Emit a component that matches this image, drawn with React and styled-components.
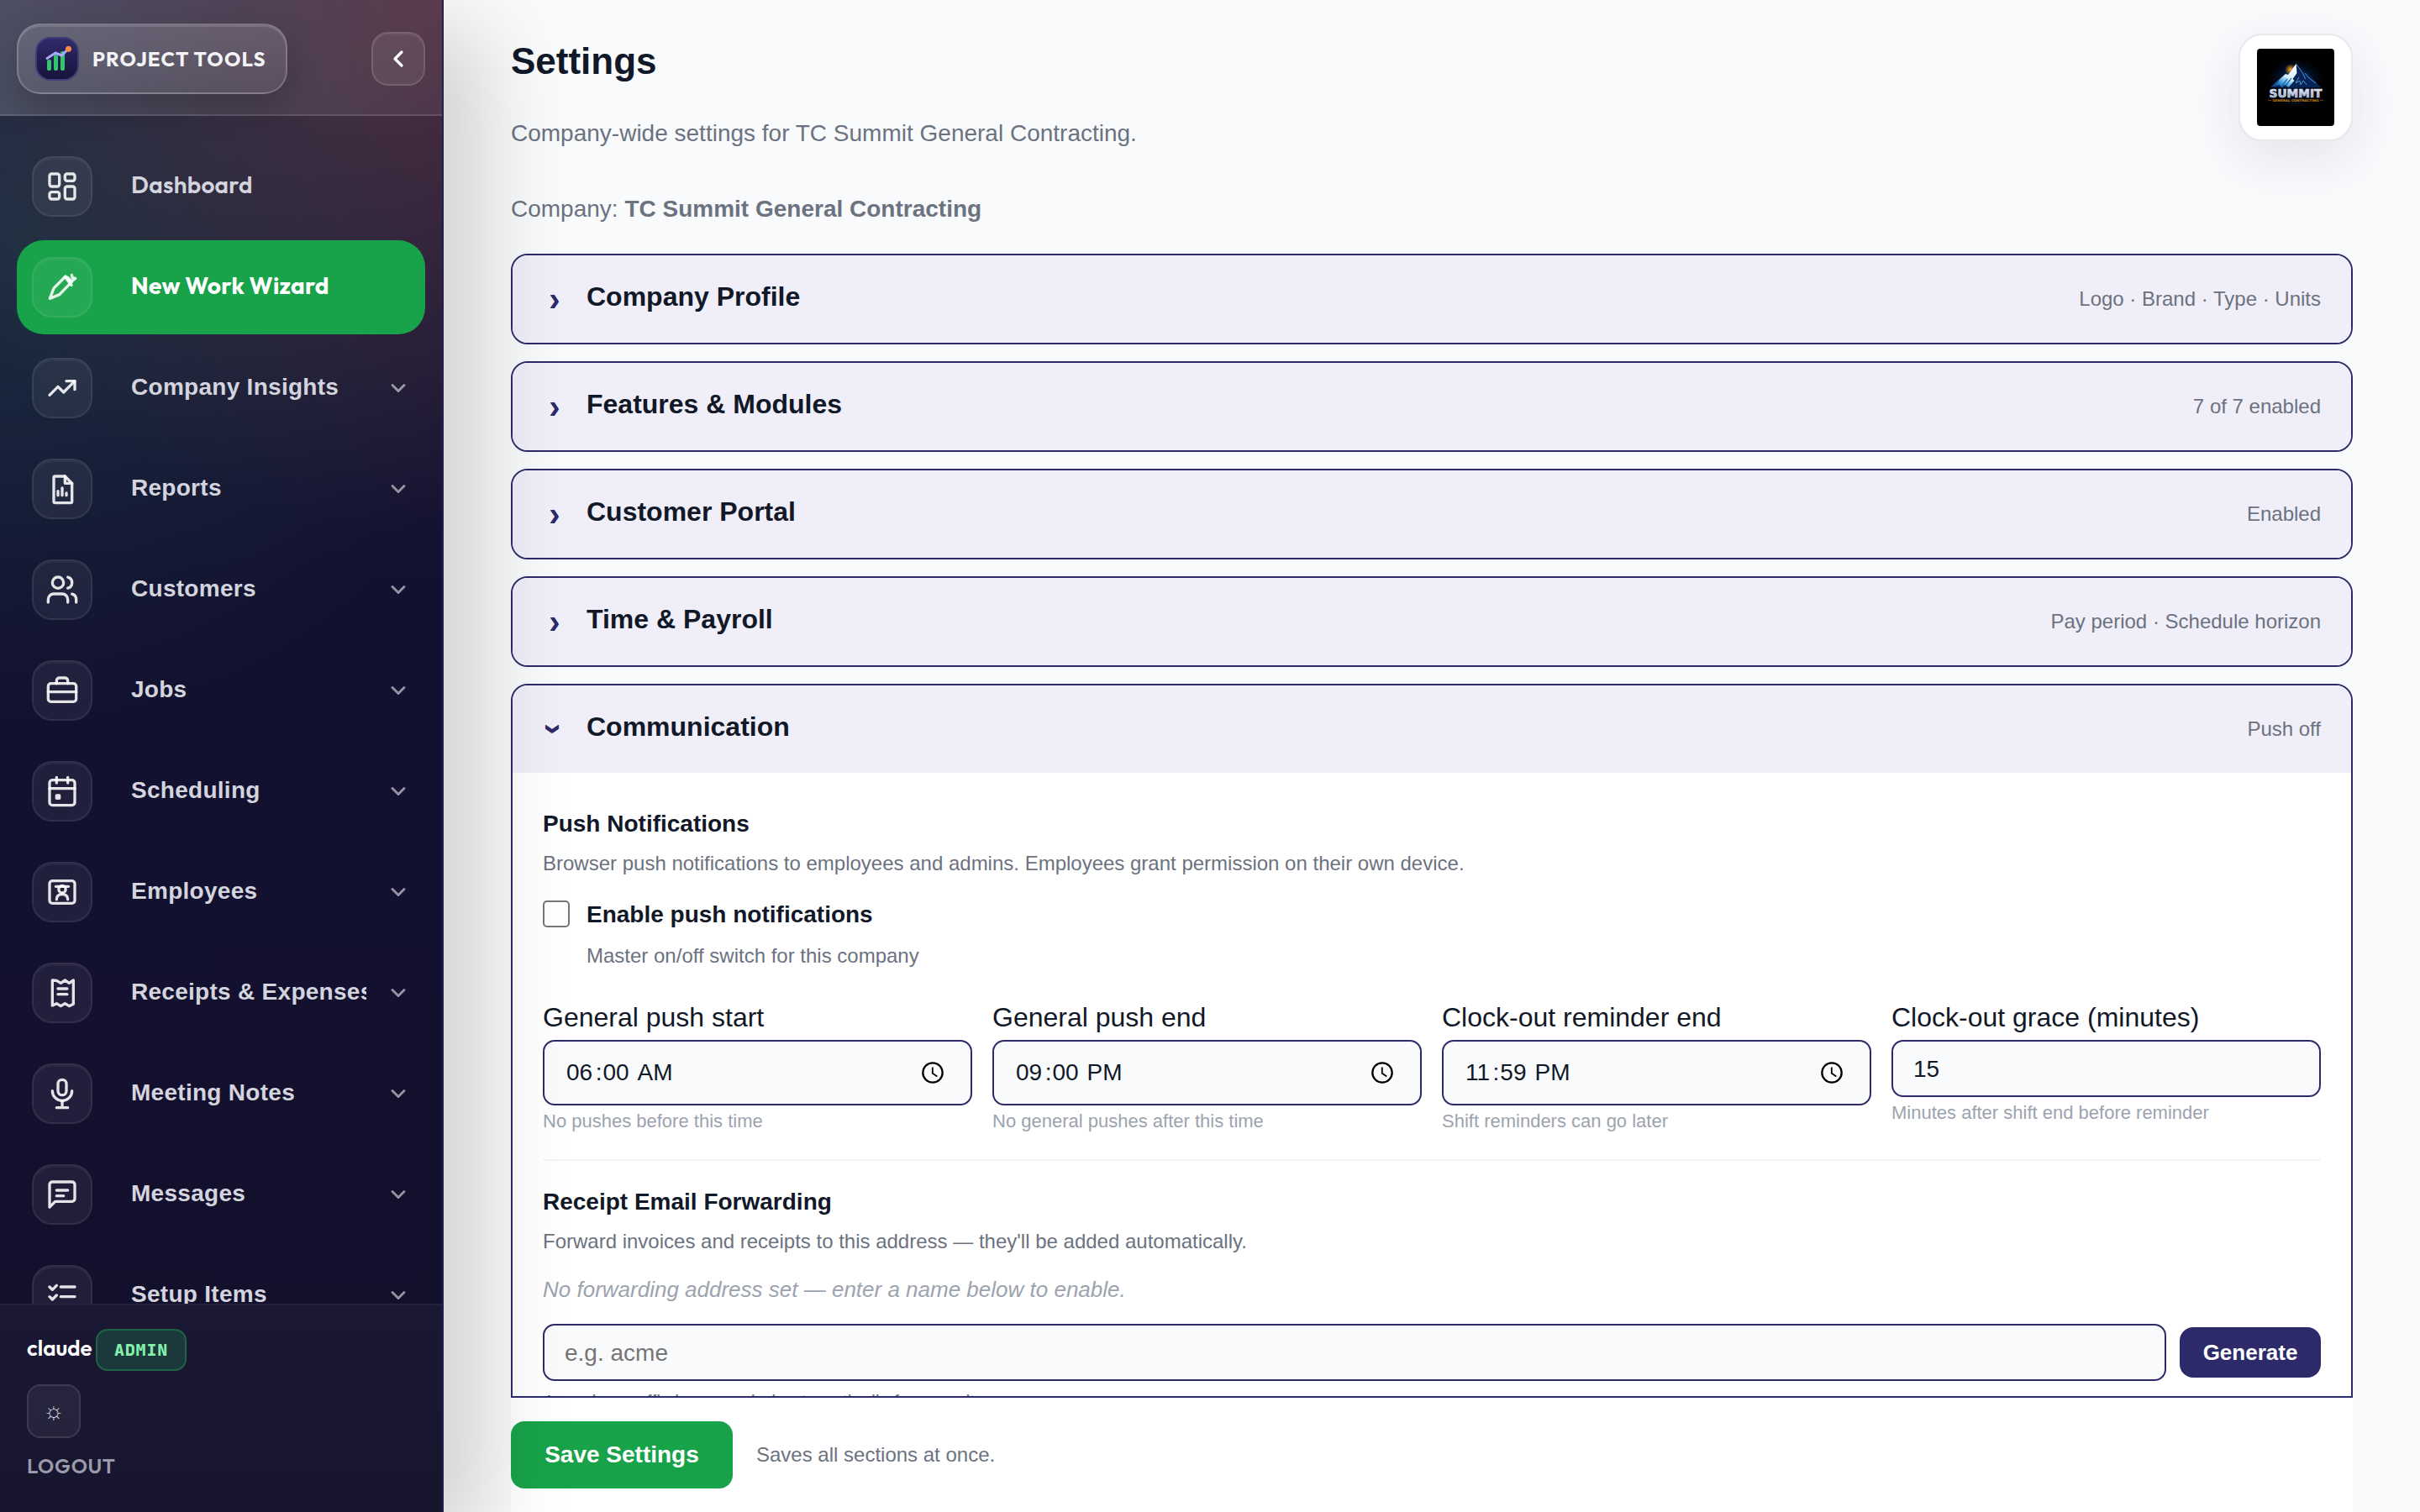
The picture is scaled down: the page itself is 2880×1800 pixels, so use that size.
import React from "react";
import styled, { createGlobalStyle } from "styled-components";

const GlobalStyle = createGlobalStyle`
  * {
    box-sizing: border-box;
  }
  body {
    margin: 0;
    background: #f9fafc;
    color: #111827;
    font-family: "Liberation Sans", Arial, sans-serif;
  }
  button {
    font-family: inherit;
    border: 0;
  }
  h1, h2, h3, p {
    margin: 0;
  }
`;

const Shell = styled.div`
  display: flex;
  width: 2880px;
  height: 1800px;
  overflow: hidden;
`;

/* ---------- sidebar ---------- */

const Sidebar = styled.aside`
  position: relative;
  z-index: 2;
  display: flex;
  flex-direction: column;
  flex: none;
  width: 528px;
  height: 1800px;
  border-right: 2px solid #221f4e;
  color: #fff;
  background:
    radial-gradient(620px 560px at 0% 300px, rgba(34, 120, 90, 0.24), rgba(34, 120, 90, 0) 100%),
    radial-gradient(700px 640px at 100% 0%, rgba(255, 112, 60, 0.22), rgba(255, 112, 60, 0) 100%),
    linear-gradient(180deg, #1e1b42 0%, #131130 38%, #141130 65%, #120f2a 100%);
  box-shadow: 44px 36px 100px rgba(0, 0, 0, 0.17);
`;

const SidebarHeader = styled.div`
  display: flex;
  align-items: center;
  justify-content: space-between;
  flex: none;
  height: 138px;
  padding: 0 20px;
  border-bottom: 2px solid rgba(255, 255, 255, 0.12);
  background: linear-gradient(
    100deg,
    rgba(255, 255, 255, 0.17),
    rgba(255, 255, 255, 0.1) 50%,
    rgba(255, 255, 255, 0.06)
  );
`;

const Brand = styled.div`
  display: flex;
  align-items: center;
  gap: 16px;
  width: 322px;
  height: 84px;
  padding: 0 20px;
  margin-top: 4px;
  border: 2px solid rgba(255, 255, 255, 0.2);
  border-radius: 28px;
  background: linear-gradient(180deg, rgba(255, 255, 255, 0.14), rgba(255, 255, 255, 0.08));
  box-shadow: 0 16px 40px rgba(0, 0, 0, 0.2), inset 0 2px 0 rgba(255, 255, 255, 0.12);
`;

const BrandName = styled.span`
  font-family: Outfit, Lato, sans-serif;
  font-size: 24px;
  font-weight: 700;
  letter-spacing: 1.2px;
  white-space: nowrap;
  color: #f4f4f7;
`;

const CollapseButton = styled.button`
  display: flex;
  align-items: center;
  justify-content: center;
  width: 64px;
  height: 64px;
  margin-top: 4px;
  padding: 0;
  border: 2px solid rgba(255, 255, 255, 0.13);
  border-radius: 20px;
  background: rgba(255, 255, 255, 0.08);
  box-shadow: inset 0 2px 0 rgba(255, 255, 255, 0.05);
  color: #fff;
`;

const Nav = styled.nav`
  display: flex;
  flex-direction: column;
  gap: 8px;
  flex: 1;
  min-height: 0;
  padding: 28px 20px 0;
  overflow: hidden;
`;

const NavItem = styled.a`
  display: flex;
  align-items: center;
  flex: none;
  height: 112px;
  padding: 0 18px;
  border-radius: 32px;
  background: ${(props) => (props.$active ? "#18a34a" : "transparent")};
  color: ${(props) => (props.$active ? "#fff" : "#d3d4de")};
`;

const NavIcon = styled.span`
  display: flex;
  align-items: center;
  justify-content: center;
  flex: none;
  width: 72px;
  height: 72px;
  margin-right: 46px;
  border: 2px solid rgba(255, 255, 255, 0.08);
  border-radius: 24px;
  background: rgba(255, 255, 255, 0.06);
  box-shadow: inset 0 2px 0 rgba(255, 255, 255, 0.04);
  color: rgba(255, 255, 255, 0.88);
`;

const NavLabel = styled.span`
  flex: 1;
  min-width: 0;
  overflow: hidden;
  padding-bottom: ${(props) => (props.$brand ? 5 : 3)}px;
  font-family: ${(props) =>
    props.$brand ? "Outfit, Lato, sans-serif" : '"Liberation Sans", Arial, sans-serif'};
  font-size: 28px;
  font-weight: ${(props) => (props.$active ? 700 : 600)};
  line-height: 36px;
  letter-spacing: 0.28px;
  white-space: nowrap;
`;

const NavCaret = styled.span`
  display: flex;
  flex: none;
  margin-left: 24px;
  color: rgba(255, 255, 255, 0.55);
`;

const SidebarFooter = styled.div`
  display: flex;
  flex-direction: column;
  align-items: flex-start;
  flex: none;
  height: 248px;
  padding: 28px 32px 0;
  border-top: 2px solid rgba(255, 255, 255, 0.06);
  background: linear-gradient(180deg, rgba(255, 255, 255, 0.035), rgba(255, 255, 255, 0.02));
  font-family: Outfit, Lato, sans-serif;
`;

const UserRow = styled.div`
  display: flex;
  align-items: center;
  gap: 5px;
  height: 50px;
`;

const UserName = styled.span`
  width: 77px;
  font-size: 26px;
  font-weight: 600;
  line-height: 46px;
  padding-bottom: 4px;
  white-space: nowrap;
`;

const RoleBadge = styled.span`
  display: flex;
  align-items: center;
  justify-content: center;
  width: 108px;
  height: 50px;
  border: 2px solid rgba(34, 197, 94, 0.32);
  border-radius: 14px;
  background: rgba(34, 197, 94, 0.2);
  color: #86efac;
  font-family: "JetBrains Mono", "DejaVu Sans Mono", monospace;
  font-size: 20px;
  font-weight: 800;
  letter-spacing: 0.8px;
`;

const ThemeButton = styled.button`
  display: flex;
  align-items: center;
  justify-content: center;
  width: 64px;
  height: 64px;
  margin-top: 16px;
  padding: 0;
  border: 2px solid rgba(255, 255, 255, 0.1);
  border-radius: 16px;
  background: rgba(255, 255, 255, 0.06);
  color: #d3d4de;
  font-family: "Liberation Sans", sans-serif;
  font-size: 28px;
`;

const Logout = styled.a`
  margin-top: 17px;
  color: #9b9cab;
  font-size: 24px;
  font-weight: 600;
  line-height: 32px;
  letter-spacing: 0.72px;
`;

/* ---------- page ---------- */

const Main = styled.main`
  display: flex;
  flex-direction: column;
  flex: 1;
  min-width: 0;
  height: 1800px;
`;

const Scroll = styled.div`
  flex: 1;
  min-height: 0;
  padding: 40px 80px 0;
  overflow: hidden;
`;

const PageHeader = styled.header`
  display: flex;
  align-items: flex-start;
  justify-content: space-between;
  height: 140px;
`;

const PageTitle = styled.h1`
  margin-top: 8px;
  font-size: 44px;
  line-height: 50px;
`;

const Lead = styled.p`
  margin-top: ${(props) => props.$gap}px;
  color: #6b7280;
  font-size: 28px;
  line-height: 44px;
`;

const LogoCard = styled.div`
  width: 136px;
  height: 128px;
  padding: 16px 20px;
  border: 2px solid #e8e7ee;
  border-radius: 28px;
  background: #fff;
  box-shadow: 0 20px 60px rgba(45, 42, 106, 0.1);
  svg {
    display: block;
    border-radius: 4px;
  }
`;

const Sections = styled.div`
  display: flex;
  flex-direction: column;
  gap: 20px;
  margin-top: 31px;
`;

const SectionCard = styled.section`
  flex: none;
  border: 2px solid #2d2a6a;
  border-radius: 20px;
  background: #fff;
  overflow: hidden;
`;

const SectionHead = styled.div`
  display: flex;
  align-items: center;
  height: 104px;
  padding: 0 36px;
  background: #f0eef8;
`;

const SectionArrow = styled.span`
  flex: none;
  width: 28px;
  margin-right: 24px;
  color: #2d2a6a;
  font-size: 40px;
  font-weight: 700;
  line-height: 28px;
  text-align: center;
  transform: ${(props) => (props.$open ? "rotate(90deg)" : "none")};
`;

const SectionTitle = styled.h2`
  flex: 1;
  padding-bottom: 6px;
  font-size: 32px;
  line-height: 40px;
`;

const SectionNote = styled.span`
  color: #6b7280;
  font-size: 24px;
`;

const SectionBody = styled.div`
  padding: 37px 36px 80px;
`;

const GroupTitle = styled.h3`
  font-size: 28px;
  line-height: 48px;
`;

const GroupText = styled.p`
  margin-top: 5px;
  color: #6b7280;
  font-size: 24px;
  line-height: 36px;
`;

const CheckRow = styled.label`
  display: flex;
  align-items: flex-start;
  gap: 20px;
  margin-top: 26px;
  font-size: 28px;
  font-weight: 700;
  line-height: 34px;
`;

const CheckBox = styled.input`
  appearance: none;
  width: 32px;
  height: 32px;
  margin: 0;
  border: 2px solid #767676;
  border-radius: 5px;
  background: #fff;
`;

const CheckHint = styled.p`
  margin: 14px 0 0 52px;
  color: #6b7280;
  font-size: 24px;
  line-height: 36px;
`;

const FieldGrid = styled.div`
  display: grid;
  grid-template-columns: repeat(4, 1fr);
  gap: 24px;
  align-items: start;
  margin-top: 35px;
`;

const FieldLabel = styled.div`
  font-size: 32px;
  line-height: 40px;
`;

const FieldBox = styled.div`
  display: flex;
  align-items: center;
  height: ${(props) => (props.$time ? 78 : 68)}px;
  margin-top: 7px;
  padding: ${(props) => (props.$time ? "0 32px 0 26px" : "2px 24px 0")};
  border: 2px solid #2d2a6a;
  border-radius: 14px;
  background: #f9fafc;
  font-size: 28px;
  line-height: 32px;
  svg {
    margin-left: auto;
  }
`;

const TimePart = styled.span`
  margin-right: ${(props) => props.$after}px;
`;

const FieldHint = styled.p`
  margin-top: 4px;
  color: #9ca3af;
  font-size: 22px;
  line-height: 30px;
`;

const Divider = styled.hr`
  height: 2px;
  margin: 30px 0 25px;
  border: 0;
  background: #f3f4f6;
`;

const EmptyNote = styled.p`
  margin-top: 19px;
  color: #9ca3af;
  font-size: 26px;
  font-style: italic;
  line-height: 40px;
`;

const ForwardRow = styled.div`
  display: flex;
  align-items: center;
  gap: 16px;
  margin-top: 21px;
`;

const TextInput = styled.input`
  flex: 1;
  min-width: 0;
  height: 68px;
  padding: 2px 24px 0;
  border: 2px solid #2d2a6a;
  border-radius: 14px;
  background: #f9fafc;
  font-family: inherit;
  font-size: 28px;
  &::placeholder {
    color: #757575;
  }
`;

const GenerateButton = styled.button`
  width: 168px;
  height: 60px;
  padding: 0;
  border-radius: 16px;
  background: #2d2a6a;
  color: #fff;
  font-size: 26px;
  font-weight: 700;
`;

const SuffixHint = styled.p`
  margin-top: 10px;
  color: #6b7280;
  font-size: 22px;
  line-height: 30px;
`;

const SaveBar = styled.div`
  display: flex;
  align-items: center;
  gap: 28px;
  flex: none;
  height: 138px;
  margin: 0 80px;
  border-top: 2px solid #2d2a6a;
  background: #fff;
  color: #6b7280;
  font-size: 24px;
`;

const SaveButton = styled.button`
  width: 264px;
  height: 80px;
  padding: 0;
  border-radius: 16px;
  background: #18a34a;
  color: #fff;
  font-size: 28px;
  font-weight: 700;
`;

const Icon = ({ size = 40, stroke = 2, children }) => (
  <svg
    width={size}
    height={size}
    viewBox="0 0 24 24"
    fill="none"
    stroke="currentColor"
    strokeWidth={stroke}
    strokeLinecap="round"
    strokeLinejoin="round"
  >
    {children}
  </svg>
);

const icons = {
  dashboard: (
    <>
      <rect x="3" y="3" width="7" height="9" rx="1.5" />
      <rect x="14" y="3" width="7" height="5" rx="1.5" />
      <rect x="14" y="12" width="7" height="9" rx="1.5" />
      <rect x="3" y="16" width="7" height="5" rx="1.5" />
    </>
  ),
  wizard: (
    <>
      <path d="M3.2 20 6 12.7 14.4 4.2l3.8 4.6-8.1 8.4z" />
      <path d="m14 4.5 4.6 6" />
      <path d="m16 5 3 3" />
      <path d="m18.8 3.2.6 2.2 2 .2-1.6 1.3" />
    </>
  ),
  insights: (
    <>
      <path d="m3 17 6-6 4 4 8-8" />
      <path d="M15 7h6v6" />
    </>
  ),
  reports: (
    <>
      <path d="M14 3H7a1 1 0 0 0-1 1v17a1 1 0 0 0 1 1h11a1 1 0 0 0 1-1V8z" />
      <path d="M14 3v5h5" />
      <path d="M9 13.600v3M12 11.300v5.300M15 15v1.600" />
    </>
  ),
  customers: (
    <>
      <path d="M16 21v-2a4 4 0 0 0-4-4H6a4 4 0 0 0-4 4v2" />
      <circle cx="9" cy="7" r="4" />
      <path d="M22 21v-2a4 4 0 0 0-3-3.87" />
      <path d="M16 3.13a4 4 0 0 1 0 7.75" />
    </>
  ),
  jobs: (
    <>
      <rect x="2" y="7" width="20" height="13" rx="2" />
      <path d="M8 7V5a2 2 0 0 1 2-2h4a2 2 0 0 1 2 2v2" />
      <path d="M2 13h20" />
    </>
  ),
  scheduling: (
    <>
      <rect x="3" y="4" width="18" height="18" rx="2" />
      <path d="M8 2v4M16 2v4M3 10h18" />
      <rect x="8" y="15" width="2" height="2" />
    </>
  ),
  employees: (
    <>
      <rect x="3" y="4" width="18" height="16" rx="2" />
      <path d="M7.5 8h9" />
      <circle cx="12" cy="10" r="2.5" />
      <path d="M8 17.3c0-2.4 1.5-3.7 4-3.7s4 1.3 4 3.7" />
    </>
  ),
  receipts: (
    <>
      <path d="M5 3l3 .2 3 1.800 3-2 3 2 3-2v17l-3 1.400-3-1.800-3 1.800-3-1.800L5 21z" />
      <path d="M9 9h6.500M9 13h6.500" />
    </>
  ),
  notes: (
    <>
      <rect x="9" y="2" width="6" height="11" rx="3" />
      <path d="M5 10a7 7 0 0 0 14 0" />
      <path d="M12 17v5M8 22h8" />
    </>
  ),
  messages: (
    <>
      <path d="M21 15a2 2 0 0 1-2 2H7l-4 4V5a2 2 0 0 1 2-2h14a2 2 0 0 1 2 2z" />
      <path d="M8 9h8M8 13h5" />
    </>
  ),
  setup: (
    <>
      <path d="m3 6 2 2 3-3M3 13l2 2 3-3M3 20l2 2 3-3" />
      <path d="M11 6h10M11 13h10M11 20h10" />
    </>
  ),
};

const navItems = [
  { icon: "dashboard", label: "Dashboard", brand: true },
  { icon: "wizard", label: "New Work Wizard", brand: true, active: true },
  { icon: "insights", label: "Company Insights" },
  { icon: "reports", label: "Reports" },
  { icon: "customers", label: "Customers" },
  { icon: "jobs", label: "Jobs" },
  { icon: "scheduling", label: "Scheduling" },
  { icon: "employees", label: "Employees" },
  { icon: "receipts", label: "Receipts & Expenses" },
  { icon: "notes", label: "Meeting Notes" },
  { icon: "messages", label: "Messages" },
  { icon: "setup", label: "Setup Items" },
];

const closedSections = [
  { title: "Company Profile", note: "Logo · Brand · Type · Units" },
  { title: "Features & Modules", note: "7 of 7 enabled" },
  { title: "Customer Portal", note: "Enabled" },
  { title: "Time & Payroll", note: "Pay period · Schedule horizon" },
];

const timeFields = [
  { label: "General push start", time: ["06", "00", "AM"], hint: "No pushes before this time" },
  { label: "General push end", time: ["09", "00", "PM"], hint: "No general pushes after this time" },
  { label: "Clock-out reminder end", time: ["11", "59", "PM"], hint: "Shift reminders can go later" },
];

const AppMark = () => (
  <svg width="52" height="52" viewBox="0 0 52 52" fill="none">
    <defs>
      <linearGradient id="mark" x1="0" y1="0" x2="0" y2="1">
        <stop offset="0" stopColor="#2f2b6b" />
        <stop offset="1" stopColor="#17133a" />
      </linearGradient>
    </defs>
    <rect x="1" y="1" width="50" height="50" rx="17" fill="url(#mark)" stroke="#403b7a" strokeWidth="2" />
    <rect x="14" y="27" width="5" height="13" rx="2" fill="#34c56b" />
    <rect x="22" y="21" width="5" height="19" rx="2" fill="#34c56b" />
    <rect x="30" y="17" width="5" height="23" rx="2" fill="#34c56b" />
    <path
      d="M14 25.5 24 19l7.500 3 8-8"
      stroke="#a5a8fb"
      strokeWidth="3"
      strokeLinecap="round"
      strokeLinejoin="round"
    />
    <circle cx="39.500" cy="14.300" r="3.500" fill="#ff8645" />
  </svg>
);

const SummitLogo = () => (
  <svg width="92" height="92" viewBox="0 0 92 92">
    <defs>
      <radialGradient id="glow">
        <stop offset="0" stopColor="#0f4fa8" stopOpacity="0.9" />
        <stop offset="1" stopColor="#001030" stopOpacity="0" />
      </radialGradient>
      <radialGradient id="sun">
        <stop offset="0" stopColor="#ffb52e" />
        <stop offset="1" stopColor="#ff9500" stopOpacity="0" />
      </radialGradient>
      <linearGradient id="snow" x1="0.800" y1="0" x2="0.200" y2="1">
        <stop offset="0" stopColor="#ffffff" />
        <stop offset="0.500" stopColor="#d5edfc" />
        <stop offset="0.750" stopColor="#3f9fe0" />
        <stop offset="1" stopColor="#0a4180" />
      </linearGradient>
      <linearGradient id="steel" x1="0" y1="0" x2="0" y2="1">
        <stop offset="0" stopColor="#ffffff" />
        <stop offset="1" stopColor="#7f93b8" />
      </linearGradient>
    </defs>
    <rect width="92" height="92" fill="#000" />
    <ellipse cx="46" cy="36" rx="34" ry="25" fill="url(#glow)" />
    <ellipse cx="46" cy="62" rx="24" ry="10" fill="url(#glow)" opacity="0.300" />
    <circle cx="40" cy="25" r="7" fill="url(#sun)" />
    <path d="M17 45 34 30l3 1 9.500-13L56 31l3-3 17 18H17z" fill="#062556" />
    <path d="M17 45 34 30l3 1 9.500-13 1 11-5 7 2 2-7 8-4-3-4 3-3-3-5 2z" fill="url(#snow)" />
    <path d="m46.500 18 8 11 3 7M57 29l5 6 8 6M50 34l-4 7 5-3 1 5 3-5 4 5" stroke="#5d9fdc" strokeWidth="0.900" fill="none" />
    <path d="m36 36-6 8m11-9-7 9m-8-6-5 6" stroke="#0b4c93" strokeWidth="1.100" />
    <text
      x="46"
      y="58"
      textAnchor="middle"
      textLength="63"
      lengthAdjust="spacingAndGlyphs"
      fontFamily="DejaVu Sans, sans-serif"
      fontWeight="700"
      fontSize="13.500"
      fill="url(#steel)"
      stroke="#c8d2e6"
      strokeWidth="0.700"
    >
      SUMMIT
    </text>
    <path d="M13 61.700h4M75 61.700h4" stroke="#a86f0a" strokeWidth="0.700" />
    <text
      x="46"
      y="63.200"
      textAnchor="middle"
      textLength="55"
      lengthAdjust="spacingAndGlyphs"
      fontFamily="DejaVu Sans, sans-serif"
      fontWeight="700"
      fontSize="3.800"
      fill="#d08a10"
    >
      GENERAL CONTRACTING
    </text>
  </svg>
);

const ClockIcon = () => (
  <svg width="26" height="26" viewBox="0 0 26 26" fill="none" stroke="#000">
    <circle cx="13" cy="13" r="11.700" strokeWidth="2.300" />
    <path d="M12.800 6.500v7.300l5.500 3.600" strokeWidth="1.800" />
  </svg>
);

const TimeField = ({ field }) => (
  <div>
    <FieldLabel>{field.label}</FieldLabel>
    <FieldBox $time>
      <TimePart $after={3.5}>{field.time[0]}</TimePart>
      <TimePart $after={1}>:</TimePart>
      <TimePart $after={10}>{field.time[1]}</TimePart>
      <TimePart $after={0}>{field.time[2]}</TimePart>
      <ClockIcon />
    </FieldBox>
    <FieldHint>{field.hint}</FieldHint>
  </div>
);

const SidebarNav = () => (
  <Sidebar>
    <SidebarHeader>
      <Brand>
        <AppMark />
        <BrandName>PROJECT TOOLS</BrandName>
      </Brand>
      <CollapseButton>
        <Icon size={32} stroke={2.4}>
          <path d="m15 18-6-6 6-6" />
        </Icon>
      </CollapseButton>
    </SidebarHeader>
    <Nav>
      {navItems.map((item) => (
        <NavItem key={item.label} $active={item.active}>
          <NavIcon>
            <Icon>{icons[item.icon]}</Icon>
          </NavIcon>
          <NavLabel $brand={item.brand} $active={item.active}>
            {item.label}
          </NavLabel>
          {!item.brand && (
            <NavCaret>
              <Icon size={28} stroke={2.5}>
                <path d="m6 9 6 6 6-6" />
              </Icon>
            </NavCaret>
          )}
        </NavItem>
      ))}
    </Nav>
    <SidebarFooter>
      <UserRow>
        <UserName>claude</UserName>
        <RoleBadge>ADMIN</RoleBadge>
      </UserRow>
      <ThemeButton>☼</ThemeButton>
      <Logout>LOGOUT</Logout>
    </SidebarFooter>
  </Sidebar>
);

const App = () => {
  return (
    <>
      <GlobalStyle />
      <Shell>
        <SidebarNav />
        <Main>
          <Scroll>
            <PageHeader>
              <div>
                <PageTitle>Settings</PageTitle>
                <Lead $gap={39}>Company-wide settings for TC Summit General Contracting.</Lead>
              </div>
              <LogoCard>
                <SummitLogo />
              </LogoCard>
            </PageHeader>
            <Lead $gap={47}>
              Company: <strong>TC Summit General Contracting</strong>
            </Lead>
            <Sections>
              {closedSections.map((section) => (
                <SectionCard key={section.title}>
                  <SectionHead>
                    <SectionArrow>›</SectionArrow>
                    <SectionTitle>{section.title}</SectionTitle>
                    <SectionNote>{section.note}</SectionNote>
                  </SectionHead>
                </SectionCard>
              ))}
              <SectionCard>
                <SectionHead>
                  <SectionArrow $open>›</SectionArrow>
                  <SectionTitle>Communication</SectionTitle>
                  <SectionNote>Push off</SectionNote>
                </SectionHead>
                <SectionBody>
                  <GroupTitle>Push Notifications</GroupTitle>
                  <GroupText>
                    Browser push notifications to employees and admins. Employees grant permission on
                    their own device.
                  </GroupText>
                  <CheckRow>
                    <CheckBox type="checkbox" />
                    Enable push notifications
                  </CheckRow>
                  <CheckHint>Master on/off switch for this company</CheckHint>
                  <FieldGrid>
                    {timeFields.map((field) => (
                      <TimeField key={field.label} field={field} />
                    ))}
                    <div>
                      <FieldLabel>Clock-out grace (minutes)</FieldLabel>
                      <FieldBox>15</FieldBox>
                      <FieldHint>Minutes after shift end before reminder</FieldHint>
                    </div>
                  </FieldGrid>
                  <Divider />
                  <GroupTitle>Receipt Email Forwarding</GroupTitle>
                  <GroupText>
                    Forward invoices and receipts to this address — they'll be added automatically.
                  </GroupText>
                  <EmptyNote>No forwarding address set — enter a name below to enable.</EmptyNote>
                  <ForwardRow>
                    <TextInput placeholder="e.g. acme" />
                    <GenerateButton>Generate</GenerateButton>
                  </ForwardRow>
                  <SuffixHint>A random suffix is appended automatically for security.</SuffixHint>
                </SectionBody>
              </SectionCard>
            </Sections>
          </Scroll>
          <SaveBar>
            <SaveButton>Save Settings</SaveButton>
            <span>Saves all sections at once.</span>
          </SaveBar>
        </Main>
      </Shell>
    </>
  );
};

export default App;
